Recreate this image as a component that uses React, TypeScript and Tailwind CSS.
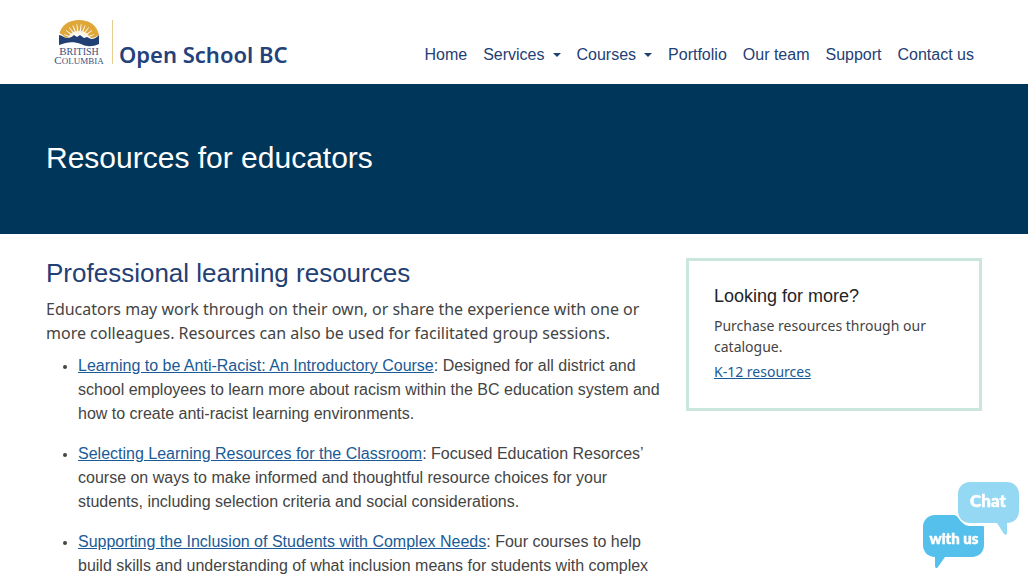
const navItems = [
  { label: "Home", menu: false },
  { label: "Services", menu: true },
  { label: "Courses", menu: true },
  { label: "Portfolio", menu: false },
  { label: "Our team", menu: false },
  { label: "Support", menu: false },
  { label: "Contact us", menu: false },
];

const resources = [
  {
    title: "Learning to be Anti-Racist: An Introductory Course",
    text: "Designed for all district and school employees to learn more about racism within the BC education system and how to create anti-racist learning environments.",
  },
  {
    title: "Selecting Learning Resources for the Classroom",
    text: "Focused Education Resorces’ course on ways to make informed and thoughtful resource choices for your students, including selection criteria and social considerations.",
  },
  {
    title: "Supporting the Inclusion of Students with Complex Needs",
    text: "Four courses to help build skills and understanding of what inclusion means for students with complex",
  },
];

const rays = [-70, -54, -38, -23, -8, 8, 23, 38, 54, 70];

const Logo = () => (
  <svg width="236" height="52" viewBox="0 0 236 52" role="img" aria-label="British Columbia Open School BC">
    {/* Sun */}
    <path d="M5 16C7 6 15 1 25 1s18 5 20 15l-6 4H11z" fill="#dfa73a" />
    {rays.map((angle) => (
      <path key={angle} d="M24 21L24.7 5h.6L26 21z" fill="#fff" transform={`rotate(${angle} 25 21)`} />
    ))}
    <path d="M14 20c1-5 5-8 11-8s10 3 11 8z" fill="#fdf5e2" />
    {/* Mountains and water */}
    <path d="M5 14c3 1 5 4 8 5l5-2 3-3 3 2 3-2 4 4 3-1 3 2c4 0 6-2 8-3v8H5z" fill="#fff" />
    <path
      d="M5 16c3 0 5 3 8 3 3 0 5-1 7-3l3 2 3-2 4 3 3-1 4 2c4 0 6-2 8-4v9c-7 3-12 3-18 0-8-3-14-2-22 1z"
      fill="#234075"
    />
    <g fill="#3c5080" fontFamily="'Liberation Serif', serif" textAnchor="middle">
      <text x="25" y="36" fontSize="11">
        B<tspan fontSize="10">RITISH</tspan>
      </text>
      <text x="25" y="45" fontSize="11">
        C<tspan fontSize="9">OLUMBIA</tspan>
      </text>
    </g>
    <path d="M58.5 1v44" stroke="#e6cd8f" />
    <text x="65" y="44" fill="#24427a" fontFamily="'Noto Sans', sans-serif" fontSize="22" fontWeight="600">
      Open School BC
    </text>
  </svg>
);

const ChatButton = () => (
  <button type="button" aria-label="Chat with us" className="fixed right-2 bottom-2 cursor-pointer">
    <svg width="98" height="90" viewBox="0 0 98 90">
      <path
        d="M13 35h19c5 0 6 10 15 11h14c1 0 1 1 1 2v17c0 7-5 12-12 12H23L16 87c-1 2-3 1-3-1v-9C6 77 1 72 1 65V47C1 40 6 35 13 35z"
        fill="#56c0ec"
      />
      <path
        d="M48 2h37c7 0 12 5 12 12v17c0 7-5 12-12 12v10c0 2-2 2-3 1L75 43H48c-7 0-12-5-12-12V14C36 7 41 2 48 2z"
        fill="#95d8f4"
      />
      <g
        fill="#fff"
        stroke="#fff"
        strokeWidth="0.5"
        fontFamily="Lato, sans-serif"
        fontWeight="900"
        textAnchor="middle"
      >
        <text x="66" y="27" fontSize="17">Chat</text>
        <text x="32" y="64" fontSize="15">with us</text>
      </g>
    </svg>
  </button>
);

const App = () => {
  return (
    <div className="bg-white font-['Liberation_Sans',Arial,sans-serif] text-[#444]">
      {/* Header */}
      <header className="mx-auto flex h-[84px] max-w-[960px] items-center justify-between px-3">
        <a href="#" className="mt-1.5 ml-2">
          <Logo />
        </a>
        <nav className="mt-[26px]">
          <ul className="flex">
            {navItems.map((item) => (
              <li key={item.label}>
                {item.menu ? (
                  <button type="button" className="flex items-center gap-2 px-2 text-[#234075]">
                    {item.label}
                    <span className="border-x-4 border-t-4 border-x-transparent" />
                  </button>
                ) : (
                  <a href="#" className="block px-2 text-[#234075]">
                    {item.label}
                  </a>
                )}
              </li>
            ))}
          </ul>
        </nav>
      </header>

      {/* Page title */}
      <section className="bg-[#003659]">
        <div className="mx-auto flex h-[150px] max-w-[960px] items-center px-3 pb-1">
          <h1 className="text-[30px] text-white">Resources for educators</h1>
        </div>
      </section>

      {/* Content */}
      <main className="mx-auto grid max-w-[960px] grid-cols-3 items-start gap-6 px-3 pt-6">
        <section className="col-span-2">
          <h2 className="mb-2 text-[26px] leading-[31px] text-[#234075]">Professional learning resources</h2>
          <p className="mb-[9px] font-['Noto_Sans',sans-serif]">
            Educators may work through on their own, or share the experience with one or more colleagues. Resources can
            also be used for facilitated group sessions.
          </p>
          <ul className="list-disc space-y-4 pl-8 marker:text-sm">
            {resources.map((item) => (
              <li key={item.title}>
                <a href="#" className="text-[#1a5a96] underline">
                  {item.title}
                </a>
                : {item.text}
              </li>
            ))}
          </ul>
        </section>

        <aside className="border-3 border-[#cbe6dc] px-[25px] pt-6 pb-[26px] font-['Noto_Sans',sans-serif] text-sm leading-[21px]">
          <h3 className="mb-2 font-['Liberation_Sans',Arial,sans-serif] text-lg leading-[22px] text-[#212529]">
            Looking for more?
          </h3>
          <p className="mb-1">Purchase resources through our catalogue.</p>
          <a href="#" className="text-[#1a5a96] underline">
            K-12 resources
          </a>
        </aside>
      </main>

      <ChatButton />
    </div>
  );
};

export default App;
